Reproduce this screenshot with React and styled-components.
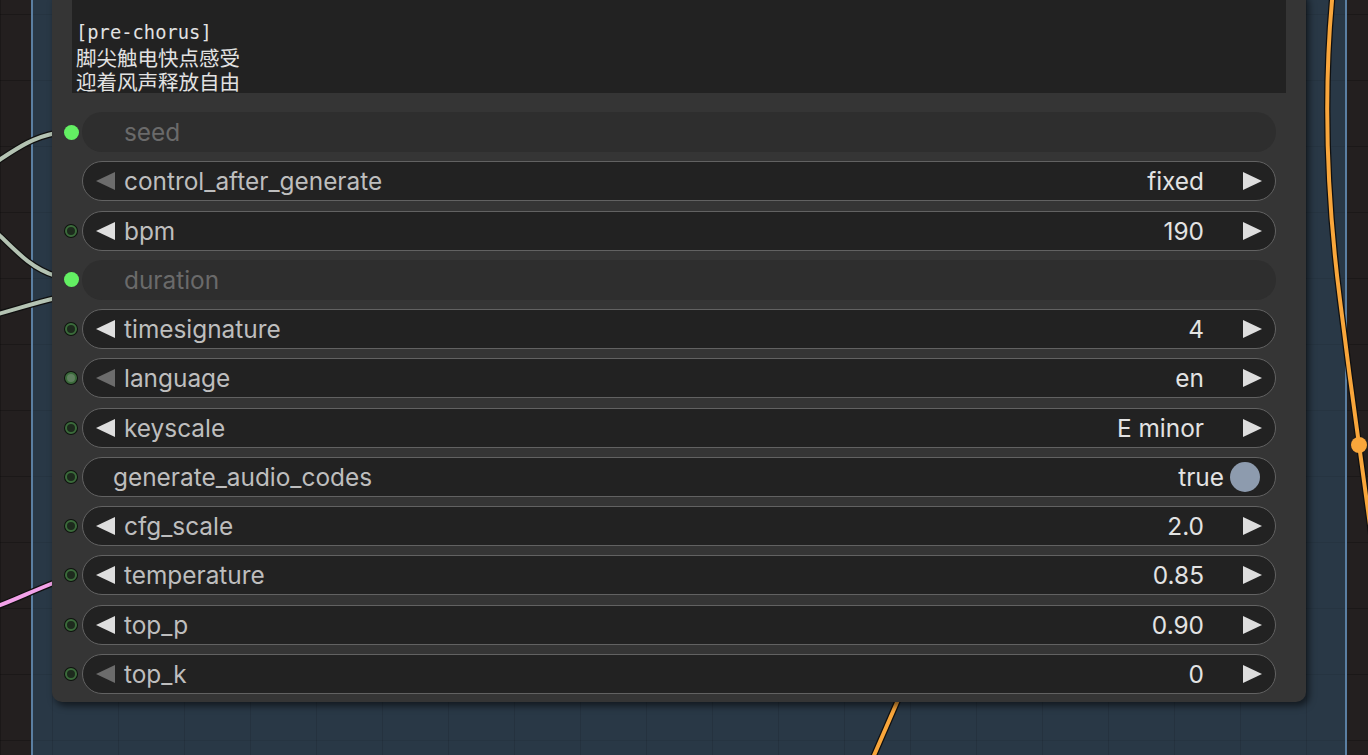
import React from 'react';
import styled, { createGlobalStyle } from 'styled-components';

const GlobalStyle = createGlobalStyle`
  html, body {
    margin: 0;
    padding: 0;
    background: #221f1f;
    overflow: hidden;
  }
  body {
    font-family: Inter, "Noto Sans", sans-serif;
  }
`;

const Canvas = styled.div`
  position: relative;
  width: 1368px;
  height: 755px;
  overflow: hidden;
  display: flex;
  background-color: #231f1f;
  background-image:
    linear-gradient(rgba(0, 0, 0, 0.22) 1px, transparent 1px),
    linear-gradient(90deg, rgba(0, 0, 0, 0.22) 1px, transparent 1px);
  background-size: 66px 66px;
  background-position: 0 14px;
`;

const Strip = styled.div`
  width: ${p => p.$w}px;
  flex-shrink: 0;
`;

const Group = styled.div`
  flex: 1;
  min-width: 0;
  background-color: #293846;
  background-image:
    linear-gradient(rgba(0, 0, 0, 0.08) 1px, transparent 1px),
    linear-gradient(90deg, rgba(0, 0, 0, 0.1) 1px, transparent 1px);
  background-size: 66px 66px;
  background-position: 19px 14px;
  border-left: 2px solid #5b7fa2;
  border-right: 2px solid #5b7fa2;
  padding-left: 19px;
`;

const Node = styled.div`
  position: relative;
  z-index: 2;
  width: 1254px;
  margin-top: -10px;
  padding-top: 10px;
  padding-bottom: 8px;
  background: #353535;
  border-radius: 10px;
  box-shadow: 3px 4px 7px rgba(0, 0, 0, 0.55);
`;

const TextArea = styled.div`
  margin: 0 20px;
  height: 93px;
  background: #222222;
  overflow: hidden;
  display: flex;
  flex-direction: column;
  justify-content: flex-end;
  padding-left: 4px;
`;

const TextBlock = styled.div`
  color: #e2e2e2;
`;

const Line = styled.div`
  height: 24px;
  line-height: 24px;
  white-space: pre;
  font-family: ${p => (p.$cjk ? '"Noto Sans CJK SC", "Noto Sans", sans-serif' : '"DejaVu Sans Mono", "Liberation Mono", monospace')};
  font-size: ${p => (p.$cjk ? '20.5px' : '18.8px')};
`;

const Widgets = styled.div`
  display: flex;
  flex-direction: column;
  gap: 9.27px;
  margin-top: 19px;
  padding-right: 30px;
`;

const Row = styled.div`
  display: grid;
  grid-template-columns: 30px 1fr;
  align-items: center;
  height: 40px;
`;

const SlotCell = styled.div`
  display: flex;
  align-items: center;
  height: 100%;
`;

const LinkedSlot = styled.span`
  width: 15px;
  height: 15px;
  margin-left: 11.5px;
  border-radius: 50%;
  background: #63f063;
`;

const OpenSlot = styled.span`
  width: 8px;
  height: 8px;
  margin-left: 13px;
  border-radius: 50%;
  background: ${p => (p.$light ? '#5f7f5f' : '#1d2a1d')};
  border: 2px solid #3b6b3b;
  box-shadow: 0 0 0 1px #0e130e;
`;

const Pill = styled.div`
  height: 40px;
  box-sizing: border-box;
  display: flex;
  align-items: center;
  border-radius: 20px;
  background: ${p => (p.$disabled ? '#2e2e2e' : '#222222')};
  border: ${p => (p.$disabled ? 'none' : '1.5px solid #626262')};
  padding: 0 ${p => (p.$toggle ? 15 : 13)}px 0 ${p => (p.$toggle ? 30 : 13)}px;
  font-size: 24.4px;
`;

const Arrow = styled.span`
  width: 0;
  height: 0;
  flex-shrink: 0;
  border-top: 9.5px solid transparent;
  border-bottom: 9.5px solid transparent;
  ${p => (p.$dir === 'left' ? 'border-right' : 'border-left')}: 19px solid ${p => (p.$dim ? '#6c6c6c' : '#dedede')};
`;

const Label = styled.span`
  flex: 1;
  color: ${p => (p.$disabled ? '#6a6a6a' : '#bebebe')};
  margin-left: ${p => (p.$plain ? 0 : 9)}px;
  padding-left: ${p => (p.$disabled ? 20 : 0)}px;
  white-space: nowrap;
`;

const Value = styled.span`
  color: #e3e3e3;
  margin-right: ${p => (p.$toggle ? 6 : 39)}px;
  white-space: nowrap;
`;

const Knob = styled.span`
  width: 30px;
  height: 30px;
  border-radius: 50%;
  background: #8d9bae;
`;

const Wires = styled.svg`
  position: absolute;
  left: 0;
  top: 0;
  z-index: 1;
  pointer-events: none;
`;

const rows = [
  { kind: 'disabled', label: 'seed', slot: 'linked' },
  { kind: 'combo', label: 'control_after_generate', value: 'fixed', dimLeft: true },
  { kind: 'number', label: 'bpm', value: '190', slot: 'open' },
  { kind: 'disabled', label: 'duration', slot: 'linked' },
  { kind: 'number', label: 'timesignature', value: '4', slot: 'open' },
  { kind: 'combo', label: 'language', value: 'en', dimLeft: true, slot: 'open', light: true },
  { kind: 'combo', label: 'keyscale', value: 'E minor', slot: 'open' },
  { kind: 'toggle', label: 'generate_audio_codes', value: 'true', slot: 'open' },
  { kind: 'number', label: 'cfg_scale', value: '2.0', slot: 'open' },
  { kind: 'number', label: 'temperature', value: '0.85', slot: 'open' },
  { kind: 'number', label: 'top_p', value: '0.90', slot: 'open' },
  { kind: 'number', label: 'top_k', value: '0', dimLeft: true, slot: 'open' },
];

const Wire = ({ d, color }) => (
  <g>
    <path d={d} stroke="#101010" strokeWidth="6.5" fill="none" strokeLinecap="round" />
    <path d={d} stroke={color} strokeWidth="4" fill="none" strokeLinecap="round" />
  </g>
);

const WidgetRow = ({ row }) => {
  let body;
  if (row.kind === 'disabled') {
    body = (
      <Pill $disabled>
        <Label $disabled>{row.label}</Label>
      </Pill>
    );
  } else if (row.kind === 'toggle') {
    body = (
      <Pill $toggle>
        <Label $plain>{row.label}</Label>
        <Value $toggle>{row.value}</Value>
        <Knob />
      </Pill>
    );
  } else {
    body = (
      <Pill>
        <Arrow $dir="left" $dim={row.dimLeft} />
        <Label>{row.label}</Label>
        <Value>{row.value}</Value>
        <Arrow $dir="right" />
      </Pill>
    );
  }

  return (
    <Row>
      <SlotCell>
        {row.slot === 'linked' && <LinkedSlot />}
        {row.slot === 'open' && <OpenSlot $light={row.light} />}
      </SlotCell>
      {body}
    </Row>
  );
};

export default function App() {
  return (
    <>
      <GlobalStyle />
      <Canvas>
        <Strip $w={31} />
        <Group>
          <Node>
            <TextArea>
              <TextBlock>
                <Line>[pre-chorus]</Line>
                <Line $cjk>脚尖触电快点感受</Line>
                <Line $cjk>迎着风声释放自由</Line>
              </TextBlock>
            </TextArea>
            <Widgets>
              {rows.map(r => (
                <WidgetRow key={r.label} row={r} />
              ))}
            </Widgets>
          </Node>
        </Group>
        <Strip $w={21} />
        <Wires width="1368" height="755" viewBox="0 0 1368 755">
          <Wire d="M -10 166 C 15 150, 30 138, 56 133" color="#b4c3b3" />
          <Wire d="M -10 226 C 15 250, 30 268, 56 276" color="#b4c3b3" />
          <Wire d="M -10 316 C 15 310, 30 304, 56 298" color="#b4c3b3" />
          <Wire d="M -10 609 C 15 600, 30 592, 56 582" color="#f3a2ea" />
          <Wire d="M 1333 -10 C 1326 60, 1322 160, 1340 300 C 1350 380, 1358 440, 1372 540" color="#f9a63b" />
          <Wire d="M 898 700 L 872 760" color="#f9a63b" />
          <circle cx="1359" cy="445" r="8" fill="#f9a63b" />
        </Wires>
      </Canvas>
    </>
  );
}
